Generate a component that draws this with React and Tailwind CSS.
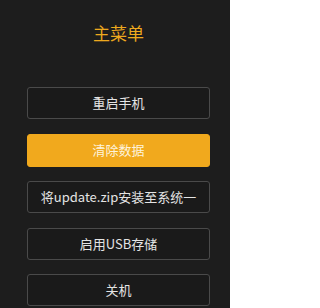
import React from 'react';

const items = [
  { label: '重启手机' },
  { label: '清除数据', active: true },
  { label: '将update.zip安装至系统一' },
  { label: '启用USB存储' },
  { label: '关机' },
];

const App = () => {
  return (
    <div className="w-[230px] h-[308px] overflow-hidden bg-[#1d1d1d] font-['Noto_Sans_CJK_SC',sans-serif]">
      <h1 className="pt-[22px] pl-[27px] w-[210px] text-center text-[17px] leading-[22px] text-[#eea91e]">主菜单</h1>
      <div className="mt-[43px] ml-[27px] w-[183px] flex flex-col gap-[14.5px]">
        {items.map((it) => (
          <div
            key={it.label}
            className={
              it.active
                ? 'h-[33px] rounded-[3px] bg-[#f1a91d] border border-[#f1a91d] flex items-center justify-center text-[13px] text-[#fdf3dc] whitespace-nowrap'
                : 'h-[32px] rounded-[3px] border border-[#4a4a4a] bg-[#1a1a1a] flex items-center justify-center text-[13px] text-[#e4e4e4] whitespace-nowrap'
            }
          >
            {it.label}
          </div>
        ))}
      </div>
    </div>
  );
};

export default App;
